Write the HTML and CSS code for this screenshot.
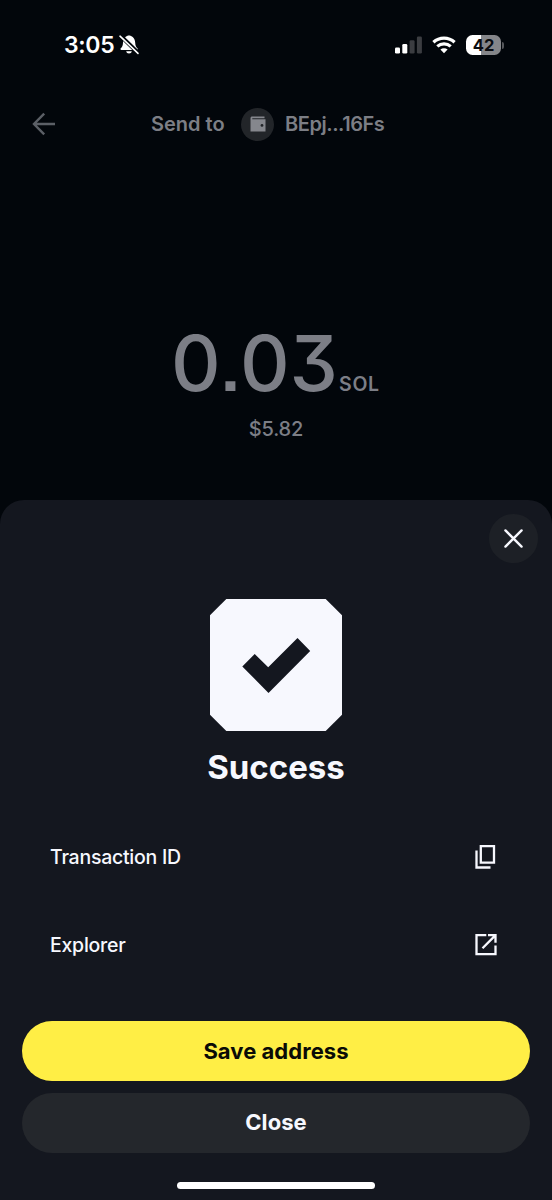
FILE: index.html
```html
<!DOCTYPE html>
<html lang="en">
<head>
<meta charset="utf-8">
<title>Send SOL</title>
<link rel="stylesheet" href="styles.css">
</head>
<body>
<div class="screen">
  <header class="status">
    <div class="status-left">
      <span class="time">3:05</span>
      <svg class="bell" width="22" height="22" viewBox="0 0 22 22">
        <path d="M11 1.500C13.500 1.500 17 3.600 17.200 8.800C17.300 11.600 17.900 13 19.400 14.200C20.100 14.800 19.800 15.900 18.800 15.900H3.400C2.400 15.900 2.100 14.800 2.800 14.200C4.300 13 4.900 11.600 5 8.800C5.200 3.600 8.500 1.500 11 1.500z" fill="#fff"/>
        <path d="M8.200 17.300h5.600c-.3 1.400-1.300 2.200-2.800 2.200s-2.500-.8-2.800-2.200z" fill="#fff"/>
        <path d="M2.500 1.800l17.500 17" stroke="#02060b" stroke-width="4"/>
        <path d="M2 2.200l18 17.200" stroke="#fff" stroke-width="1.600" stroke-linecap="round"/>
      </svg>
    </div>
    <div class="status-right">
      <svg width="27" height="18" viewBox="0 0 27 18">
        <rect x="0" y="11.500" width="5" height="6" rx="1.300" fill="#fff"/>
        <rect x="7.300" y="8" width="5" height="9.500" rx="1.300" fill="#fff"/>
        <rect x="14.600" y="4.200" width="5" height="13.300" rx="1.300" fill="#3b3d41"/>
        <rect x="21.900" y="0.500" width="5" height="17" rx="1.300" fill="#3b3d41"/>
      </svg>
      <svg width="24" height="18" viewBox="0 0 24 18">
        <path d="M12 17.300l-3.600-3.700c2-1.700 5.200-1.700 7.200 0z" fill="#fff"/>
        <path d="M1.400 6.200c6-5.500 15.200-5.500 21.200 0" fill="none" stroke="#fff" stroke-width="3.200"/>
        <path d="M5.300 10.400c3.800-3.400 9.600-3.400 13.400 0" fill="none" stroke="#fff" stroke-width="3.200"/>
      </svg>
      <div class="battery"><span class="level">42</span><i class="cap"></i></div>
    </div>
  </header>

  <nav class="topbar">
    <svg class="back" width="24" height="24" viewBox="0 0 24 24" fill="none" stroke="#5b5f66" stroke-width="2.400">
      <path d="M23 12H2M12.200 1.700L2 12l10.200 10.300"/>
    </svg>
    <span class="send">Send to</span>
    <span class="wallet">
      <svg width="16" height="16" viewBox="0 0 16 16">
        <path d="M2.200.5h12.300v1.700H2.300v1H15.500V15.500H.5V2.200C.5 1.200 1.200.5 2.200.5z" fill="#85878d"/>
        <circle cx="12" cy="9.400" r="1.400" fill="#222529"/>
      </svg>
    </span>
    <span class="address">BEpj...16Fs</span>
  </nav>

  <section class="amount">
    <div class="value"><span class="number">0.03</span><span class="unit">SOL</span></div>
    <div class="fiat">$5.82</div>
  </section>

  <main class="sheet">
    <button class="dismiss" aria-label="Dismiss">
      <svg width="19" height="19" viewBox="0 0 20 20" stroke="#f7f8fe" stroke-width="2.500" stroke-linecap="round"><path d="M1.500 1.500l17 17M18.500 1.500L1.500 18.500"/></svg>
    </button>
    <svg class="badge" width="132" height="132" viewBox="0 0 132 132">
      <path d="M16.300 0H115.700L132 16.300V115.700L115.700 132H16.300L0 115.700V16.300z" fill="#f7f8fe"/>
      <path d="M32.300 67.500L44.700 54.900L58.200 68.200L87.500 39L100.200 51.900L58.500 93.900z" fill="#14171f"/>
    </svg>
    <h1 class="title">Success</h1>
    <div class="row first">
      <span>Transaction ID</span>
      <svg width="22" height="26" viewBox="0 0 22 26" fill="none" stroke="#f7f8fe" stroke-width="2.300">
        <path d="M5.800 2.200H19V18.700H5.800z"/><path d="M1.500 6.400V23.500H15.500"/>
      </svg>
    </div>
    <div class="row">
      <span>Explorer</span>
      <svg width="22" height="22" viewBox="0 0 22 22" fill="none" stroke="#f7f8fe" stroke-width="2.300">
        <path d="M11.300 1.200H1.500V20.200H20.500V11.500"/><path d="M13 1.200H20.500V8.700M20.300 1.400L7.500 14.200"/>
      </svg>
    </div>
    <button class="btn primary">Save address</button>
    <button class="btn secondary">Close</button>
    <div class="home"></div>
  </main>
</div>
</body>
</html>
```
FILE: styles.css
```css
* { box-sizing: border-box; }
body { margin: 0; background: #02060b; font-family: Inter, "Liberation Sans", sans-serif; }
button { border: 0; padding: 0; font-family: inherit; }
svg { display: block; flex: none; }
.screen { width: 552px; height: 1200px; overflow: hidden; display: flex; flex-direction: column; }

.status { height: 88px; padding: 2px 48px 0 64px; display: flex; align-items: center; justify-content: space-between; color: #fff; }
.status-left { display: flex; align-items: center; gap: 4px; }
.time { font-size: 23px; font-weight: 600; line-height: 28px; letter-spacing: -0.3px; }
.status-right { display: flex; align-items: center; gap: 10px; }
.battery { display: flex; align-items: center; gap: 1px; }
.level { width: 35px; height: 20px; border-radius: 6.500px; background: linear-gradient(90deg, #fff 43%, #85868a 43%); color: #0a0c10; font-size: 16.500px; font-weight: 700; line-height: 20px; text-align: center; }
.cap { width: 2px; height: 7px; border-radius: 0 2px 2px 0; background: #55575b; }

.topbar { height: 72px; padding-left: 32px; display: flex; align-items: center; color: #7c7e85; font-size: 20px; font-weight: 600; }
.send { margin-left: 95px; width: 90px; white-space: nowrap; }
.wallet { width: 33px; height: 33px; border-radius: 50%; background: #222529; display: flex; align-items: center; justify-content: center; }
.address { margin-left: 11px; letter-spacing: -0.45px; }

.amount { height: 340px; padding-top: 157px; color: #7c7e86; }
.value { height: 92px; padding-left: 171px; display: flex; align-items: baseline; font-weight: 550; line-height: 92px; white-space: nowrap; }
.number { width: 168px; font-size: 77px; font-feature-settings: "cv09", "ss07"; }
.unit { font-size: 19.500px; font-weight: 600; letter-spacing: 0.7px; }
.fiat { margin-top: 7px; font-size: 20px; font-weight: 450; line-height: 26px; letter-spacing: -0.2px; text-align: center; }

.sheet { flex: 1; padding: 14px 22px 0; border-radius: 24px 24px 0 0; background: #14171f; color: #f7f8fe; display: flex; flex-direction: column; align-items: center; }
.dismiss { align-self: flex-end; margin-right: -8px; width: 49px; height: 49px; border-radius: 50%; background: #1d2026; display: flex; align-items: center; justify-content: center; }
.badge { margin-top: 36px; }
.title { margin: 14px 0 0; font-size: 33px; font-weight: 650; line-height: 44px; }
.row { width: 100%; height: 88px; padding: 0 33px 0 28px; display: flex; align-items: center; justify-content: space-between; font-size: 19.500px; font-weight: 500; letter-spacing: -0.25px; }
.first { margin-top: 24px; }
.btn { width: 508px; height: 60px; flex: none; border-radius: 30px; font-size: 22px; font-weight: 650; letter-spacing: 0.05px; }
.primary { margin-top: 32px; padding-bottom: 1px; background: #ffee45; color: #0b0b06; }
.secondary { margin-top: 12px; padding-bottom: 2px; background: #24272c; color: #f7f8fe; }
.home { margin-top: 29px; width: 198px; height: 7px; border-radius: 4px; background: #fff; }
```
